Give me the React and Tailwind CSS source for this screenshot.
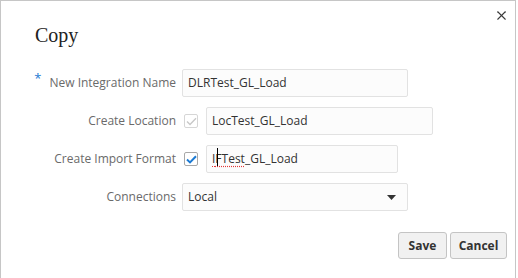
import { X } from "lucide-react";

function Checkbox({ checked, disabled }) {
  return (
    <span
      className={`flex h-[14px] w-[14px] items-center justify-center rounded-[2px] border bg-white ${
        disabled ? "border-[#d6d6d6]" : "border-[#a8a8a8]"
      }`}
    >
      {checked && (
        <svg width="11" height="9" viewBox="0 0 11 9" fill="none">
          <path
            d="M1 4.6 L4 7.4 L10 1.2"
            stroke={disabled ? "#c8c8c8" : "#1b7ad3"}
            strokeWidth={disabled ? "1.4" : "2"}
          />
        </svg>
      )}
    </span>
  );
}

function Field({ width, children }) {
  return (
    <div
      className={`flex h-[28px] items-center rounded-[2px] border border-[#e2e2e2] bg-[#fcfcfc] pl-[5px] text-[12px] text-[#333] ${width}`}
    >
      {children}
    </div>
  );
}

function Label({ children, required }) {
  return (
    <div className="flex w-[175px] items-center justify-end text-[12px] text-[#6a6a6a]">
      {required && (
        <span className="relative top-[-4px] mr-[8px] text-[13px] text-[#1b7ad3]">*</span>
      )}
      {children}
    </div>
  );
}

export default function App() {
  return (
    <div
      className="h-[278px] w-[518px] bg-white"
      style={{ fontFamily: '"Open Sans", "Noto Sans", sans-serif' }}
    >
      <div className="relative h-full w-[516px] border-l border-r border-t border-[#c6c6c6]">
        <button className="absolute right-[6px] top-[7px] text-[#3a3a3a]">
          <X size={15} strokeWidth={1.7} />
        </button>

        <h1
          className="pl-[34px] pt-[22px] text-[20px] leading-[24px] text-[#222]"
          style={{ fontFamily: '"Liberation Serif", serif' }}
        >
          Copy
        </h1>

        <div className="mt-[22px] flex flex-col gap-[10px]">
          <div className="flex items-center">
            <Label required>New Integration Name</Label>
            <div className="ml-[6px]">
              <Field width="w-[226px]">DLRTest_GL_Load</Field>
            </div>
          </div>

          <div className="flex items-center">
            <Label>Create Location</Label>
            <div className="ml-[8px]">
              <Checkbox checked disabled />
            </div>
            <div className="ml-[8px]">
              <Field width="w-[227px]">LocTest_GL_Load</Field>
            </div>
          </div>

          <div className="flex items-center">
            <Label>Create Import Format</Label>
            <div className="ml-[8px]">
              <Checkbox checked />
            </div>
            <div className="ml-[8px]">
              <Field width="w-[192px]">
                <span className="underline decoration-[#e23a3a] decoration-dotted underline-offset-[3px]">
                  <span className="relative">
                    I
                    <span className="absolute right-[-3px] top-[-2px] h-[18px] w-px bg-black" />
                  </span>
                  FTest
                </span>
                _GL_Load
              </Field>
            </div>
          </div>

          <div className="flex items-center">
            <Label>Connections</Label>
            <div className="ml-[6px]">
              <Field width="w-[226px] justify-between pr-[11px]">
                <span>Local</span>
                <svg width="9" height="5" viewBox="0 0 9 5">
                  <path d="M0 0 H9 L4.5 5 Z" fill="#333" />
                </svg>
              </Field>
            </div>
          </div>
        </div>

        <div className="mt-[21px] flex justify-end gap-[3px] pr-[8px]">
          <button className="h-[27px] w-[49px] rounded-[3px] border border-[#c4c4c4] bg-[#f1f1f1] text-[12px] font-bold text-[#333]">
            Save
          </button>
          <button className="h-[27px] w-[57px] rounded-[3px] border border-[#c4c4c4] bg-[#f1f1f1] text-[12px] font-bold text-[#333]">
            Cancel
          </button>
        </div>
      </div>
    </div>
  );
}
